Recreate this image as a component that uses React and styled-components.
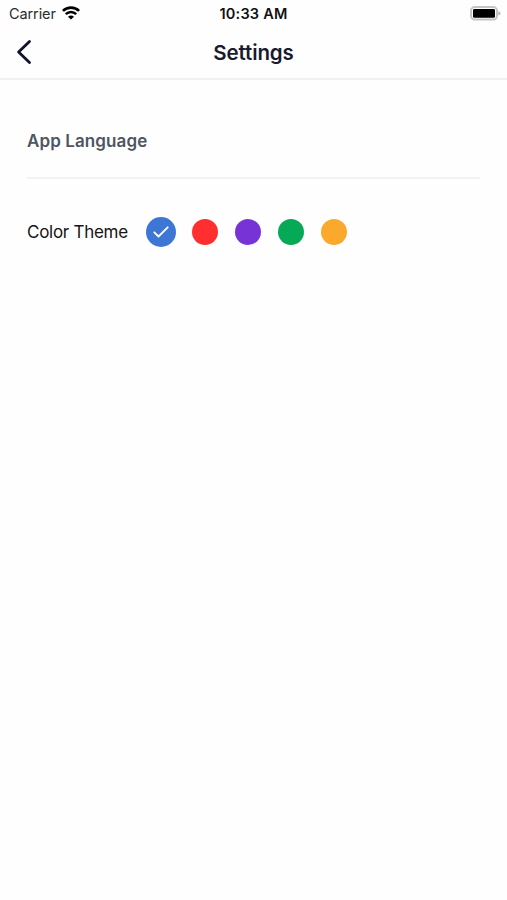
import { useState } from 'react';
import styled, { createGlobalStyle } from 'styled-components';

const THEMES = [
	{ name: 'blue', color: '#3e76d6' },
	{ name: 'red', color: '#ff2f2f' },
	{ name: 'purple', color: '#7733d6' },
	{ name: 'green', color: '#05a956' },
	{ name: 'orange', color: '#fba92c' },
];

const WifiIcon = () => (
	<svg width='18' height='14' viewBox='0 0 18 14' fill='none' stroke='#000'>
		<path d='M0.9 4.9C5.5 0.4 12.5 0.4 17.1 4.9' strokeWidth='2.7' />
		<path d='M3.8 8.2C6.8 5.2 11.2 5.2 14.2 8.2' strokeWidth='2.5' />
		<path d='M9 13.6L6 10.7C7.7 9 10.3 9 12 10.7Z' fill='#000' stroke='none' />
	</svg>
);

const BatteryIcon = () => (
	<svg width='31' height='15' viewBox='0 0 31 15' fill='none'>
		<rect x='1' y='1' width='26' height='12.6' rx='3.8' stroke='#c4c4c4' strokeWidth='2' />
		<rect x='3' y='3' width='22' height='8.8' rx='1.4' fill='#000' />
		<path d='M28.4 5.2C31.2 6 31.2 8.6 28.4 9.4Z' fill='#b3b3b3' />
	</svg>
);

const CheckIcon = () => (
	<svg width='16' height='12' viewBox='0 0 16 12' fill='none'>
		<path
			d='M1.3 6.3L5.5 10.5L14.7 1.3'
			stroke='#fff'
			strokeWidth='1.8'
			strokeLinecap='round'
			strokeLinejoin='round'
		/>
	</svg>
);

const BackIcon = () => (
	<svg width='16' height='26' viewBox='0 0 16 26' fill='none'>
		<path
			d='M13.5 2.4L2.6 13L13.5 23.6'
			stroke='#12122f'
			strokeWidth='2.8'
			strokeLinecap='round'
			strokeLinejoin='round'
		/>
	</svg>
);

const App = () => {
	const [theme, setTheme] = useState('blue');

	return (
		<Screen>
			<GlobalStyle />
			<StatusBar>
				<Carrier>
					<CarrierName>Carrier</CarrierName>
					<WifiIcon />
				</Carrier>
				<Time>10:33 AM</Time>
				<Battery>
					<BatteryIcon />
				</Battery>
			</StatusBar>
			<Header>
				<BackButton aria-label='Back'>
					<BackIcon />
				</BackButton>
				<Title>Settings</Title>
			</Header>
			<Content>
				<LanguageRow>App Language</LanguageRow>
				<ThemeRow>
					<ThemeLabel>Color Theme</ThemeLabel>
					<Swatches>
						{THEMES.map((el) => (
							<Swatch
								key={el.name}
								aria-label={el.name}
								$color={el.color}
								$selected={el.name === theme}
								onClick={() => setTheme(el.name)}
							>
								{el.name === theme && <CheckIcon />}
							</Swatch>
						))}
					</Swatches>
				</ThemeRow>
			</Content>
		</Screen>
	);
};

export default App;

const GlobalStyle = createGlobalStyle`
	* {
		box-sizing: border-box;
	}

	body {
		margin: 0;
		background: #fefefe;
		font-family: Inter, 'Liberation Sans', sans-serif;
	}

	svg {
		display: block;
	}
`;

const Screen = styled.div`
	display: flex;
	flex-direction: column;
	min-height: 100vh;
`;

const StatusBar = styled.div`
	display: grid;
	grid-template-columns: 1fr auto 1fr;
	align-items: center;
	height: 26px;
	padding: 0 6px;
	font-size: 14.5px;
	line-height: 18px;
`;

const Carrier = styled.div`
	display: flex;
	align-items: center;
	gap: 6px;
	padding-left: 3px;
`;

const CarrierName = styled.span`
	color: #2b2b2b;
	letter-spacing: -0.1px;
	padding-top: 2px;
`;

const Time = styled.span`
	color: #111;
	font-weight: 600;
	letter-spacing: 0.2px;
	padding-top: 2px;
`;

const Battery = styled.div`
	justify-self: end;
`;

const Header = styled.header`
	display: grid;
	grid-template-columns: 32px 1fr 32px;
	align-items: center;
	height: 54px;
	padding: 0 16px;
	border-bottom: 2px solid #f1f1f2;
`;

const BackButton = styled.button`
	padding: 0;
	border: 0;
	background: none;
`;

const Title = styled.h1`
	margin: 0;
	padding-top: 1px;
	color: #1a1a2e;
	font-size: 20.5px;
	font-weight: 600;
	letter-spacing: -0.1px;
	line-height: 27px;
	text-align: center;
`;

const Content = styled.main`
	padding: 24px 27px;
`;

const LanguageRow = styled.div`
	display: flex;
	align-items: center;
	height: 75px;
	border-bottom: 2px solid #f2f2f3;
	color: #4d5562;
	font-size: 17px;
	font-weight: 600;
	letter-spacing: 0.1px;
`;

const ThemeRow = styled.div`
	display: flex;
	align-items: center;
	height: 105px;
`;

const ThemeLabel = styled.span`
	width: 118.5px;
	color: #151515;
	font-size: 17px;
	letter-spacing: -0.27px;
	white-space: nowrap;
`;

const Swatches = styled.div`
	display: flex;
	align-items: center;
	gap: 16.9px;
`;

const Swatch = styled.button`
	display: flex;
	align-items: center;
	justify-content: center;
	width: ${({ $selected }) => ($selected ? '30px' : '26px')};
	height: ${({ $selected }) => ($selected ? '30px' : '26px')};
	padding: 0;
	border: 0;
	border-radius: 50%;
	background: ${({ $color }) => $color};
`;
